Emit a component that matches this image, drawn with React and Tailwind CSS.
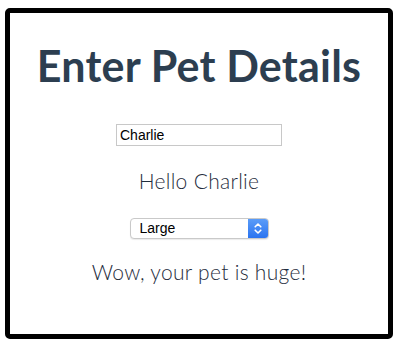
import React, { useState } from "react";

export default function App() {
  let [name, setName] = useState("Charlie");
  let [size, setSize] = useState("Large");

  return (
    <div className="w-[400px] h-[346px] bg-white pt-[8px] pl-[5px]">
      <div className="w-[388px] h-[331px] border-[5px] border-black rounded-[5px] flex flex-col items-center text-[#2c3e50] font-['Lato',sans-serif]">
        <h1 className="mt-[28px] text-[43px] leading-[50px] font-bold tracking-[0.2px]">Enter Pet Details</h1>
        <input
          value={name}
          onChange={(e) => setName(e.target.value)}
          className="mt-[33px] w-[166px] h-[22px] border border-[#c8c8c8] px-[3px] text-[14px] text-black font-['Liberation_Sans',sans-serif] outline-none"
        />
        <div className="mt-[22px] text-[21px] leading-[26px] font-light tracking-[0.3px] text-[#1f2d3d]">Hello {name}</div>
        <div className="mt-[24px] w-[139px] h-[21px] flex rounded-[4px] border border-[#c9c9c9] shadow-[0_1px_1px_rgba(0,0,0,0.08)] bg-white overflow-hidden">
          <div className="flex-1 flex items-center pl-[9px] text-[14px] text-black font-['Liberation_Sans',sans-serif]">{size}</div>
          <div className="w-[20px] h-full bg-gradient-to-b from-[#5a9cf8] to-[#2a73f0] flex items-center justify-center">
            <svg width="8" height="13" viewBox="0 0 8 13" fill="none" stroke="white" strokeWidth="1.6" strokeLinecap="round" strokeLinejoin="round">
              <path d="M1.2 4.8 L4 2 L6.8 4.8" />
              <path d="M1.2 8.2 L4 11 L6.8 8.2" />
            </svg>
          </div>
        </div>
        <div className="mt-[20px] text-[21px] leading-[26px] font-light tracking-[0.3px] text-[#1f2d3d]">Wow, your pet is huge!</div>
      </div>
    </div>
  );
}
